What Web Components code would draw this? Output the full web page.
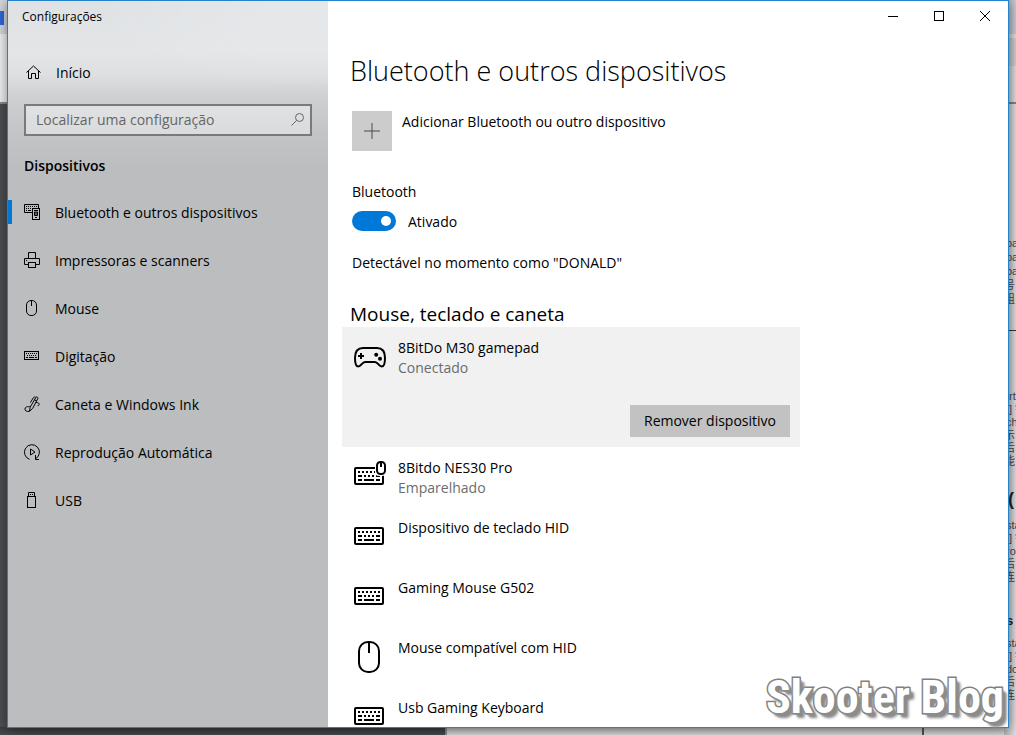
<!DOCTYPE html>
<html lang="pt-BR">
<head>
<meta charset="utf-8">
<meta name="viewport" content="width=device-width, initial-scale=1">
<title>Configurações</title>
<style>
  html, body { margin: 0; height: 100%; overflow: hidden; }
  body { font: 14px/20px "Open Sans", "Noto Sans", sans-serif; color: #000; background: #4a4d50; }
</style>
</head>
<body>
<desktop-scene>
  <settings-window heading="Configurações">
    <side-nav slot="nav">
      <nav-item icon="devices" current>Bluetooth e outros dispositivos</nav-item>
      <nav-item icon="printer">Impressoras e scanners</nav-item>
      <nav-item icon="mouse">Mouse</nav-item>
      <nav-item icon="keyboard">Digitação</nav-item>
      <nav-item icon="pen">Caneta e Windows Ink</nav-item>
      <nav-item icon="autoplay">Reprodução Automática</nav-item>
      <nav-item icon="usb">USB</nav-item>
    </side-nav>
    <bluetooth-page>
      <device-item icon="gamepad" status="Conectado" selected>8BitDo M30 gamepad</device-item>
      <device-item icon="combo" status="Emparelhado">8Bitdo NES30 Pro</device-item>
      <device-item icon="keyboard-lg">Dispositivo de teclado HID</device-item>
      <device-item icon="keyboard-lg">Gaming Mouse G502</device-item>
      <device-item icon="mouse-lg">Mouse compatível com HID</device-item>
      <device-item icon="keyboard-lg">Usb Gaming Keyboard</device-item>
    </bluetooth-page>
  </settings-window>
  <water-mark slot="mark">Skooter Blog</water-mark>
</desktop-scene>

<script>
const define = (name, html, setup) => customElements.define(name, class extends HTMLElement {
  connectedCallback() {
    if (this.shadowRoot) return;
    const root = this.attachShadow({ mode: 'open' });
    root.innerHTML = typeof html === 'function' ? html(this) : html;
    if (setup) setup(this, root);
  }
});

const KEYS_LG = `<rect x="1" y="7" width="28" height="16" rx="1" fill="none" stroke="currentColor" stroke-width="2"/>
  <path fill="currentColor" stroke="none" d="M4 10h2v2h-2zM8 10h2v2h-2zM12 10h2v2h-2zM16 10h2v2h-2zM20 10h2v2h-2zM24 10h2v2h-2z
  M4 14h4v2h-4zM10 14h2v2h-2zM14 14h2v2h-2zM18 14h2v2h-2zM22 14h4v2h-4z
  M4 18h4v2h-4zM10 18h10v2h-10zM22 18h4v2h-4z"/>`;

const ICONS = {
  home: [16, `<path d="M1.500 8.500 8.500 2l7 6.500M3.500 7v7.500h3v-5h4v5h3V7"/>`],
  search: [16, `<circle cx="9.5" cy="5.5" r="4"/><path d="M6.6 8.4 1.5 13.5"/>`],
  devices: [16, `<path d="M8 8.500H.5v-8h14V4"/><path d="M2 2.500h1M4 2.500h1M6 2.500h1M8 2.500h1M10 2.500h1M12 2.500h1M2 4.500h1M4 4.500h1M6 4.500h1M2 6.500h1M4 6.500h3"/><rect x="8.500" y="4.500" width="7" height="11"/><path d="M10 6.500h4M10.500 8v3.500h3V8zM11 13.500h2M12 8v3"/>`],
  printer: [16, `<path d="M4.500 6.500v-6h7v6M4 12.500H.5v-6h15v6H12M2.500 8v1"/><rect x="4.500" y="10.500" width="7" height="5"/>`],
  mouse: [16, `<rect x="2.500" y=".5" width="10" height="15" rx="4.500"/><path d="M7.500 1v5"/>`],
  keyboard: [16, `<rect x=".5" y="3.500" width="14" height="8"/><path d="M2 5.500h1M4 5.500h1M6 5.500h1M8 5.500h1M10 5.500h1M12 5.500h1M3 7.500h1M5 7.500h1M7 7.500h1M9 7.500h1M11 7.500h1M2 9.500h2M5 9.500h5M11 9.500h2"/>`],
  pen: [16, `<path d="M5.500 15.300C.7 16.500-.3 12 2.500 10.900c1.500-.5 2.500.2 3.300-.6M5.500 15.300l.7-4.200 5.600-9.500c.7-1.300 2.600-.4 2 1L8.700 12.400zM10.500 3.800l2.200 1.300M9.300 1.800 6.400 6.600M12 6.500c3.200-.2 4.500 2.600 1.700 3.300M9.300 1.800c.8-1 1.600-1 2.400-.4"/>`],
  autoplay: [16, `<path d="M5.500 15.300A7.500 7.500 0 1 1 11.500 14.800"/><path d="M11.500 11v4.500H15M6.500 5v6l4.500-3z"/>`],
  usb: [16, `<path d="M4.500 4V.5h6V4"/><rect x="3.500" y="4.500" width="8" height="11"/><path d="M6 2.500h1M8 2.500h1"/>`],
  plus: [16, `<path d="M0 8h16M8 0v16" stroke="#4a4a4a"/>`],
  minimize: [10, `<path d="M0 5.500h10"/>`],
  maximize: [10, `<rect x=".5" y=".5" width="9" height="9"/>`],
  close: [10, `<path d="M0 0l10 10M10 0 0 10"/>`],
  gamepad: [32, `<path stroke-width="2" d="M9 7h14c5.500 0 8 4 8 10 0 5-.6 8.500-3.300 8.500-3 0-3.800-4.500-6.700-4.500H11c-2.900 0-3.700 4.500-6.700 4.500C1.600 25.500 1 22 1 17 1 11 3.500 7 9 7z"/><path stroke-width="2" d="M4 15h6M7 12v6"/><g fill="currentColor" stroke="none"><circle cx="22.200" cy="13.800" r="2"/><circle cx="26" cy="17.800" r="2"/></g>`],
  'keyboard-lg': [32, KEYS_LG],
  combo: [32, KEYS_LG + `<rect x="21" y="0" width="11" height="15" rx="4" fill="#fff" stroke="none"/><rect x="23" y="1" width="8" height="12" rx="3.500" fill="#fff" stroke-width="2"/><path d="M27 1v5" stroke-width="2"/>`],
  'mouse-lg': [32, `<rect x="5" y="1" width="20" height="30" rx="9" stroke-width="2"/><path stroke-width="2" d="M15 1v11"/>`]
};

define('ui-icon', el => {
  const [size, body] = ICONS[el.getAttribute('name')];
  return `<style>:host{display:block;flex:none;width:${size}px;height:${size}px}svg{display:block;overflow:visible}</style>
  <svg width="${size}" height="${size}" viewBox="0 0 ${size} ${size}" fill="none" stroke="currentColor" aria-hidden="true">${body}</svg>`;
});

/* Windows lying behind the settings window; only their edges show. */
define('desktop-scene', `<style>
  :host{display:block;position:relative;height:100vh;overflow:hidden}
  .back{position:absolute;inset:0;display:grid;grid-template-columns:445px 1fr 12px;grid-template-rows:1fr 8px;background:#4a4d50}
  .left{background:linear-gradient(#d3d8de 0 34px,#f0f0f0 34px 102px,#8b8b8b 102px 104px,#4c4f52 104px)}
  .tab{width:4px;height:14px;margin-top:11px;background:#2f68d8}
  .dark{grid-row:2;grid-column:1;background:linear-gradient(#3a3d40,#4a4d50)}
  .page{grid-row:2;grid-column:2;border-left:2px solid #8a8a8a;background:linear-gradient(#bbb,#dedede);display:flex;justify-content:flex-end}
  .rule{width:2px;margin-right:80px;background:#555}
  .doc{grid-row:1/3;grid-column:3;overflow:hidden;white-space:nowrap;color:#44454a;
    font:11px/13px "Liberation Sans","Noto Sans CJK SC",sans-serif;
    background:linear-gradient(90deg,#0003,#0000),linear-gradient(#c8ccd3 0 34px,#e2e2e2 34px 38px,#d0d1d3 38px 66px,#e0e0e0 66px 102px,#888 102px 104px,#e0e0e2 104px)}
  .doc p{margin:0;height:13px}
  .l{padding-left:2px}
  .m{padding-left:5px}
  .doc .a p{height:14px}
  .a{padding-top:236px;line-height:14px}
  .b{border-top:1px solid #333;margin-top:24px;padding-top:59px}
  .big{font:bold 18px/24px "Liberation Sans",sans-serif;color:#222;padding:19px 0 8px 4px}
  .mid{font:bold 13px/18px "Liberation Sans",sans-serif;color:#222;padding:28px 0 7px 2px}
  .front{position:relative;box-sizing:border-box;height:100%;padding:0 7px 7px}
  .mark{position:absolute;right:12px;bottom:12px;pointer-events:none}
  </style>
  <div class="back">
    <div class="left"><div class="tab"></div></div>
    <div class="dark"></div>
    <div class="page"><div class="rule"></div></div>
    <div class="doc">
      <div class="a"><p class="l">ba</p><p class="l">ba</p><p class="l">ba</p><p>号</p><p>组</p></div>
      <div class="b"><p class="m">rt</p><p class="m">] 错</p><p class="l">ch</p><p>示</p><p>后</p><p>能</p></div>
      <div class="big">(</div>
      <p class="l">sta</p><p class="m">] 错</p><p class="l">ro</p><p>后</p><p>连</p>
      <div class="mid">s</div>
      <p class="l">sta</p><p class="m">] 错</p><p class="l">do</p><p>后</p><p>连</p>
    </div>
  </div>
  <div class="front"><slot></slot></div>
  <div class="mark"><slot name="mark"></slot></div>`);

define('water-mark', `<style>
  :host{display:block;font:bold 46px/52px "Liberation Sans Narrow","Roboto Condensed",Roboto,sans-serif;color:#fff;
    -webkit-text-stroke:3px #808080;paint-order:stroke fill;
    text-shadow:2px 2px 1px #8c8c8c,4px 4px 2px #8c8c8c,5px 5px 3px #9c9c9c;white-space:nowrap}
  </style><slot></slot>`);

define('settings-window', el => `<style>
  :host{display:grid;box-sizing:border-box;height:100%;grid-template-columns:320px 1fr;position:relative;
    border:1px solid #2683cb;background:#fff;box-shadow:0 2px 12px #0007}
  ::slotted(*){min-height:0;min-width:0}
  header{position:absolute;inset:0 0 auto 0;height:30px;display:flex;align-items:center;justify-content:space-between;z-index:1}
  .t{font-size:12px;line-height:16px;padding:1px 0 0 14px}
  .c{display:flex}
  button{width:46px;height:30px;border:0;padding:0;background:none;display:grid;place-items:center;color:#000}
  </style>
  <header><span class="t">${el.getAttribute('heading')}</span>
    <div class="c">
      <button aria-label="Minimizar"><ui-icon name="minimize"></ui-icon></button>
      <button aria-label="Maximizar"><ui-icon name="maximize"></ui-icon></button>
      <button aria-label="Fechar"><ui-icon name="close"></ui-icon></button>
    </div></header>
  <slot name="nav"></slot><slot></slot>`);

define('side-nav', `<style>
  :host{display:block;box-sizing:border-box;padding-top:47px;
   background:radial-gradient(ellipse 200px 90px at 90% 0,#fff3,#fff0),linear-gradient(#dfe2e5 0,#e3e5e6 50px,#dedfe1 74px,#d0d1d2 94px,#c4c5c7 128px,#bbbdbf 170px,#bbbdbf)}
  .home{display:flex;align-items:center;height:48px;padding-left:17px;gap:15px;color:inherit;text-decoration:none}
  .home span{padding-top:2px}
  .search{display:flex;align-items:center;box-sizing:border-box;height:32px;margin:8px 16px 0;padding:0 4px 0 10px;border:2px solid #787a7b;background:#fff6}
  input{flex:1;min-width:0;border:0;padding:0;background:none;font:inherit;outline:0;color:#000}
  input::placeholder{color:#666;opacity:1}
  .search ui-icon{color:#666}
  h2{margin:20px 16px 12px;font-size:14px;line-height:20px;font-weight:600}
  </style>
  <a class="home" href="#inicio"><ui-icon name="home"></ui-icon><span>Início</span></a>
  <div class="search"><input type="text" aria-label="Localizar uma configuração" placeholder="Localizar uma configuração"><ui-icon name="search"></ui-icon></div>
  <h2>Dispositivos</h2>
  <nav><slot></slot></nav>`);

define('nav-item', el => `<style>
  :host{display:block}
  a{display:flex;align-items:center;height:48px;color:inherit;text-decoration:none}
  i{width:4px;height:24px;margin-right:12px}
  :host([current]) i{background:#0078d7}
  ui-icon{margin-right:15px}
  span{padding-top:2px}
  </style><a href="#${el.getAttribute('icon')}" ${el.hasAttribute('current') ? 'aria-current="page"' : ''}><i></i><ui-icon name="${el.getAttribute('icon')}"></ui-icon><span><slot></slot></span></a>`);

define('toggle-switch', `<style>
  :host{display:block}
  label{display:block}
  .row{display:flex;align-items:center;gap:12px;margin-top:8px}
  .row span{padding-top:2px}
  input{appearance:none;display:flex;align-items:center;justify-content:flex-end;box-sizing:border-box;width:44px;height:20px;margin:0;padding:0 5px;border-radius:10px;background:#0078d7}
  input::before{content:"";width:10px;height:10px;border-radius:5px;background:#fff}
  input:not(:checked){justify-content:flex-start;background:#777}
  </style><label for="s"><slot></slot></label>
  <div class="row"><input id="s" type="checkbox" role="switch" checked><span>Ativado</span></div>`,
  (el, root) => root.querySelector('input').addEventListener('change', e => {
    root.querySelector('span').textContent = e.target.checked ? 'Ativado' : 'Desativado';
  }));

define('bluetooth-page', `<style>
  :host{display:block;box-sizing:border-box;overflow:auto;scrollbar-width:none;padding:50px 14px 0}
  h1{margin:0 8px;font-size:27px;line-height:40px;font-weight:300}
  .body{margin-left:10px}
  .add{display:flex;align-items:flex-start;gap:10px;margin:20px 0 31px;padding:0;border:0;background:none;font:inherit;color:inherit;text-align:left}
  .plus{display:grid;place-items:center;width:40px;height:40px;background:#ccc}
  .text{padding-top:1px}
  p{margin:21px 0 0}
  h2{margin:28px 8px 0;font-size:19px;line-height:26px;font-weight:400}
  </style>
  <h1>Bluetooth e outros dispositivos</h1>
  <div class="body">
    <button class="add"><span class="plus"><ui-icon name="plus"></ui-icon></span><span class="text">Adicionar Bluetooth ou outro dispositivo</span></button>
    <toggle-switch>Bluetooth</toggle-switch>
    <p>Detectável no momento como "DONALD"</p>
  </div>
  <h2>Mouse, teclado e caneta</h2>
  <slot></slot>`);

define('device-item', el => `<style>
  :host{display:flex;flex-direction:column;box-sizing:border-box;max-width:458px;min-height:60px;padding:11px 10px 9px 12px}
  :host([selected]){min-height:120px;padding-bottom:10px;justify-content:space-between;background:#f1f1f1}
  .r{display:flex;gap:12px}
  ui-icon{margin-top:3px}
  .s{color:#6c6c6c}
  button{align-self:flex-end;height:32px;padding:0 14px;border:0;background:#c2c2c2;font:inherit;color:inherit}
  </style>
  <div class="r"><ui-icon name="${el.getAttribute('icon')}"></ui-icon><div><div><slot></slot></div>${el.hasAttribute('status') ? `<div class="s">${el.getAttribute('status')}</div>` : ''}</div></div>
  ${el.hasAttribute('selected') ? '<button>Remover dispositivo</button>' : ''}`);
</script>
</body>
</html>
